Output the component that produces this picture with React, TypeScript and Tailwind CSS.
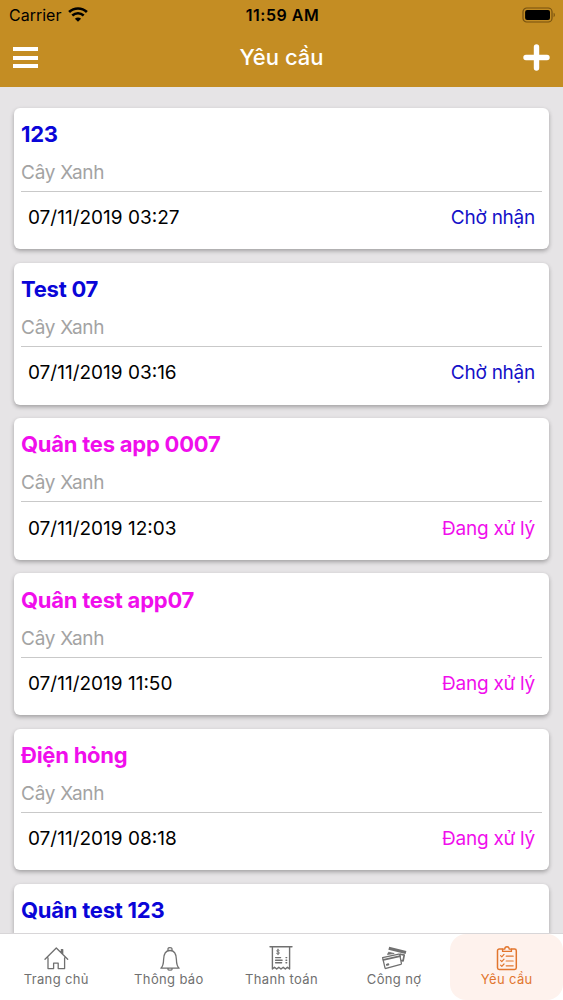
import type { ReactNode } from 'react';

type RequestStatus = 'waiting' | 'processing';

type RequestItem = {
  id: number;
  title: string;
  category: string;
  date: string;
  status: RequestStatus;
};

const STATUS_STYLES: Record<RequestStatus, { label: string; title: string; text: string }> = {
  waiting: { label: 'Chờ nhận', title: 'text-[#0a05d8]', text: 'text-[#1410c8]' },
  processing: { label: 'Đang xử lý', title: 'text-[#f00eec]', text: 'text-[#f00eec]' },
};

const REQUESTS: RequestItem[] = [
  { id: 1, title: '123', category: 'Cây Xanh', date: '07/11/2019 03:27', status: 'waiting' },
  { id: 2, title: 'Test 07', category: 'Cây Xanh', date: '07/11/2019 03:16', status: 'waiting' },
  { id: 3, title: 'Quân tes app 0007', category: 'Cây Xanh', date: '07/11/2019 12:03', status: 'processing' },
  { id: 4, title: 'Quân test app07', category: 'Cây Xanh', date: '07/11/2019 11:50', status: 'processing' },
  { id: 5, title: 'Điện hỏng', category: 'Cây Xanh', date: '07/11/2019 08:18', status: 'processing' },
];

const NEXT_TITLE = 'Quân test 123';

function TabIcon({ children }: { children: ReactNode }) {
  return (
    <svg
      viewBox="0 0 26 26"
      className="h-[26px] w-[26px]"
      fill="none"
      stroke="currentColor"
      strokeWidth="1.3"
      strokeLinejoin="round"
      strokeLinecap="round"
      aria-hidden
    >
      {children}
    </svg>
  );
}

const TABS = [
  {
    label: 'Trang chủ',
    icon: (
      <TabIcon>
        <path d="M2 14.2 13.3 3l11.4 11.2M18.4 7.8V4.6h1.3v4.6M5 13v10.6h5.6v-5.4h4.6v5.4h6.4V13" />
      </TabIcon>
    ),
  },
  {
    label: 'Thông báo',
    icon: (
      <TabIcon>
        <path d="M12 5V3.8c0-1.6 4-1.6 4 0V5M4.9 23.2c2.4-2.1 2.6-3.9 2.7-8.7.1-4.5 1.9-9 6.4-9s6.3 4.5 6.4 9c.1 4.8.3 6.6 2.7 8.7zM12 23.4v1.2c0 .8 4 .8 4 0v-1.2" />
      </TabIcon>
    ),
  },
  {
    label: 'Thanh toán',
    icon: (
      <TabIcon>
        <path d="M2 1.7h22M4.4 2v22l2.1-1.8 2.2 1.8 2.1-1.8L13 24l2.2-1.8 2.1 1.8 2.1-1.8 2.2 1.8V2" strokeWidth="1.4" />
        <path d="M11.2 5.3c-.6-.6-2.5-.5-2.5.6 0 1.2 2.7.8 2.7 2.1 0 1.1-2 1.2-2.8.5M10 4.1v5.6" strokeWidth="1" />
        <path d="M7.6 12.6h5M7.6 15.3h6.5M7.6 17.7h6M18 12.6h.7M18 15.3h.7M18 17.7h.7" strokeWidth="1.4" />
      </TabIcon>
    ),
  },
  {
    label: 'Công nợ',
    icon: (
      <TabIcon>
        <path d="m8.2 1.8 17.2 4.2-.8 2.9L7.4 4.8z" fill="currentColor" stroke="none" />
        <path d="m6.6 9.2 1-2 5.2 1.2z" fill="currentColor" strokeWidth="0.8" />
        <path d="m1.6 12.6 16.2-3.4c.6-.1.9.1 1 .6l1.6 8.6c.1.5-.1.8-.6 1L5 23.4c-.6.2-.9 0-1-.5z" strokeWidth="1.3" />
        <path d="m2.4 14.9 16.8-3.7" strokeWidth="1.7" />
        <path d="m6 19.7 1.2-.3" strokeWidth="2.2" />
        <path d="m19.6 9.2 3.6.9-1.1 5.7-1.3-.2" strokeWidth="1.7" />
      </TabIcon>
    ),
  },
  {
    label: 'Yêu cầu',
    icon: (
      <TabIcon>
        <path d="M8.5 4H5.2c-.9 0-1.7.8-1.7 1.7v17c0 .9.8 1.7 1.7 1.7h15.4c.9 0 1.7-.8 1.7-1.7v-17c0-.9-.8-1.7-1.7-1.7h-3.1" strokeWidth="1.5" />
        <path d="M8.6 6.4V4.1h2.1c.2-3.1 4.4-3.1 4.6 0h2.1v2.3z" strokeWidth="1.4" />
        <path d="m6.6 10.6 1.2 1.2 2.2-2.4m-3.4 6 1.2 1.2 2.2-2.4m-3.4 6 1.2 1.2 2.2-2.4M12.2 11.2h7M12.2 16h7M12.2 20.8h7" strokeWidth="1.2" />
      </TabIcon>
    ),
    active: true,
  },
];

function StatusBar() {
  return (
    <div className="grid h-[29px] grid-cols-3 items-center pl-[9px] pr-[7px] text-black">
      <div className="flex items-center gap-[7px]">
        <span className="text-[16px]">Carrier</span>
        <svg viewBox="0 0 20 15" className="h-[15px] w-5" fill="none" stroke="currentColor" aria-hidden>
          <path d="M1.1 5.1c5.1-4.8 12.7-4.8 17.8 0" strokeWidth="2.7" />
          <path d="M4.3 8.5c3.3-3.1 8.1-3.1 11.4 0" strokeWidth="2.5" />
          <path d="M10 14.8 6.9 11.7c1.8-1.7 4.4-1.7 6.2 0z" fill="currentColor" stroke="none" />
        </svg>
      </div>
      <span className="text-center text-[16px] font-semibold tracking-[0.5px]">11:59 AM</span>
      <svg viewBox="0 0 34 16" className="h-4 w-[34px] justify-self-end" aria-hidden>
        <rect x="1" y="1" width="29" height="14" rx="3.8" fill="none" stroke="#76500f" strokeWidth="1.2" />
        <rect x="3.1" y="3" width="24.9" height="10" rx="2" fill="#000" />
        <path d="M31.6 5.8c1.6.5 1.6 3.9 0 4.4z" fill="#76500f" />
      </svg>
    </div>
  );
}

function Header() {
  return (
    <header className="h-[87px] shrink-0 bg-[#c48d23]">
      <StatusBar />
      <div className="grid h-[57px] grid-cols-3 items-center px-[13px] text-white">
        <button className="flex w-[25px] flex-col gap-[4.5px]" aria-label="Menu">
          <span className="h-1 w-full bg-white" />
          <span className="h-1 w-full bg-white" />
          <span className="h-1 w-full bg-white" />
        </button>
        <h1 className="text-center text-[22px] font-medium">Yêu cầu</h1>
        <button className="justify-self-end" aria-label="Thêm">
          <svg viewBox="0 0 27 27" className="h-[27px] w-[27px]" fill="none" stroke="currentColor" strokeWidth="5.4" strokeLinecap="round">
            <path d="M13.5 3v21M3 13.5h21" />
          </svg>
        </button>
      </div>
    </header>
  );
}

function CardTitle({ title, status }: { title: string; status: RequestStatus }) {
  return (
    <h2 className={`text-[22px] leading-7 font-bold tracking-[-0.24px] ${STATUS_STYLES[status].title}`}>{title}</h2>
  );
}

function RequestCard({ item }: { item: RequestItem }) {
  const style = STATUS_STYLES[item.status];
  return (
    <article className="h-[141.8px] shrink-0 rounded-[6px] bg-white px-[7px] pt-[12.3px] shadow-[0_2px_4px_rgba(0,0,0,0.3)]">
      <CardTitle title={item.title} status={item.status} />
      <p className="mt-[13px] text-[19px] leading-6 tracking-[-0.25px] text-[#a3a3a3]">{item.category}</p>
      <div className="mt-[6px] flex h-[54px] items-center justify-between border-t border-[#c9c9c9] px-[7px] text-[19px]">
        <time className="text-black">{item.date}</time>
        <span className={`tracking-[-0.25px] ${style.text}`}>{style.label}</span>
      </div>
    </article>
  );
}

export default function App() {
  return (
    <div className="flex h-[1000px] w-[563px] flex-col overflow-hidden bg-[#e6e4e6] font-['Inter',sans-serif]">
      <Header />
      <main className="flex min-h-0 flex-1 flex-col gap-[13.5px] overflow-hidden px-[14px] pt-[20.5px]">
        {REQUESTS.map((item) => (
          <RequestCard key={item.id} item={item} />
        ))}
        {/* the last card runs on below the tab bar */}
        <article className="flex-1 rounded-t-[6px] bg-white px-[7px] pt-[12.3px] shadow-[0_2px_4px_rgba(0,0,0,0.3)]">
          <CardTitle title={NEXT_TITLE} status="waiting" />
        </article>
      </main>
      <nav className="grid h-[67px] shrink-0 grid-cols-5 border-t border-[#d8d6d8] bg-white">
        {TABS.map((tab) => (
          <button
            key={tab.label}
            className={`flex flex-col items-center rounded-[16px] pt-[11px] ${
              tab.active ? 'bg-[#fef2ed] text-[#e2762e]' : 'text-[#707070]'
            }`}
          >
            {tab.icon}
            <span className="text-[13px] leading-4 tracking-[0.36px]">{tab.label}</span>
          </button>
        ))}
      </nav>
    </div>
  );
}
